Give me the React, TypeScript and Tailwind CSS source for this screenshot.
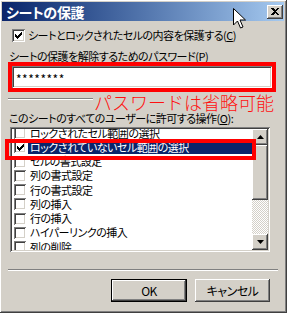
import React from "react";

const raised =
  "shadow-[inset_-1px_-1px_#404040,inset_1px_1px_#ffffff,inset_-2px_-2px_#808080,inset_2px_2px_#d4d0c8]";
const sunken =
  "shadow-[inset_1px_1px_#808080,inset_-1px_-1px_#ffffff,inset_2px_2px_#404040,inset_-2px_-2px_#d4d0c8]";

const CheckMark = () => (
  <svg width="7" height="7" viewBox="0 0 7 7" shapeRendering="crispEdges">
    <path d="M0 2h1v1h1v1h1v-1h1v-1h1v-1h1v-1h1v3h-1v1h-1v1h-1v1h-1v1h-1v-1h-1v-1h-1v-1h-1z" fill="#000" />
  </svg>
);

const Box = ({ checked, size = 13 }: { checked?: boolean; size?: number }) => (
  <div
    className={`shrink-0 bg-white flex items-center justify-center ${sunken}`}
    style={{ width: size, height: size }}
  >
    {checked && <CheckMark />}
  </div>
);

const items = [
  "ロックされたセル範囲の選択",
  "ロックされていないセル範囲の選択",
  "セルの書式設定",
  "列の書式設定",
  "行の書式設定",
  "列の挿入",
  "行の挿入",
  "ハイパーリンクの挿入",
  "列の削除",
];

const Separator = ({ className = "" }: { className?: string }) => (
  <div className={`h-[2px] border-t border-t-[#808080] border-b border-b-white ${className}`} />
);

export default function App() {
  return (
    <div
      className={`relative w-[287px] h-[313px] bg-[#d4d0c8] ${raised} pt-[2px] pl-[2px] pr-[3px] pb-[3px] flex flex-col text-[11px] tracking-[-0.5px] text-black [font-feature-settings:'palt']`}
      style={{ fontFamily: '"Noto Sans CJK JP", sans-serif' }}
    >
      {/* title bar */}
      <div className="h-[19px] flex items-center justify-between bg-gradient-to-r from-[#0a246a] to-[#a6caf0] pl-[4px] pr-[1px]">
        <span className="text-white font-bold text-[14px] tracking-[-0.3px] leading-none">シートの保護</span>
        <div className={`w-[16px] h-[14px] bg-[#d4d0c8] ${raised} flex items-center justify-center`}>
          <svg width="8" height="7" viewBox="0 0 8 7" shapeRendering="crispEdges">
            <path d="M0 0h2l2 2l2-2h2l-3 3.5l3 3.5h-2l-2-2l-2 2h-2l3-3.5z" fill="#000" />
          </svg>
        </div>
      </div>

      {/* body */}
      <div className="flex flex-col">
        <div className="mt-[7px] h-[14px] pl-[10px] flex items-center gap-[3px]">
          <Box checked />
          <span className="leading-none">シートとロックされたセルの内容を保護する(<span className="underline">C</span>)</span>
        </div>

        <div className="mt-[8px] h-[12px] pl-[7px] flex items-center">
          <span className="leading-none">シートの保護を解除するためのパスワード(<span className="underline">P</span>)</span>
        </div>

        <div className="ml-[6px] w-[268px] h-[30px] border-[4px] border-[#ff0000] bg-[#ff0000]">
          <div className={`h-full bg-white ${sunken} flex items-center pl-[4px]`}>
            <span className="text-[12px] leading-none tracking-[0.5px] pt-[3px]">********</span>
          </div>
        </div>

        <div className="h-[20px] flex items-start">
          <Separator className="mt-[6px] ml-[6px] w-[85px]" />
          <span className="text-[#ff1010] text-[18px] leading-[20px] [font-feature-settings:normal] tracking-[0px] ml-[1px] font-light">
            パスワードは省略可能
          </span>
        </div>

        <div className="h-[12px] pl-[7px] flex items-center">
          <span className="leading-none">このシートのすべてのユーザーに許可する操作(<span className="underline">O</span>):</span>
        </div>

        {/* list box */}
        <div className="relative mt-[3px] ml-[8px] w-[260px] h-[125px]">
          <div className={`absolute inset-0 bg-white ${sunken} p-[2px] flex`}>
            <div className="flex-1 overflow-hidden">
              <div className="mt-[-3px] flex flex-col">
                {items.map((t, i) => (
                  <div key={t} className="h-[14.25px] flex items-center pl-[2px]">
                    <Box checked={i === 1} size={12} />
                    <span
                      className={`ml-[2px] flex-1 pl-[2px] h-[14px] flex items-center leading-none whitespace-nowrap ${
                        i === 1 ? "bg-[#0a246a] text-white" : ""
                      }`}
                    >
                      {t}
                    </span>
                  </div>
                ))}
              </div>
            </div>
            {/* scrollbar */}
            <div className="w-[16px] flex flex-col">
              <div className={`h-[16px] bg-[#d4d0c8] ${raised} flex items-center justify-center`}>
                <svg width="7" height="4" viewBox="0 0 7 4"><path d="M3.5 0L7 4H0z" fill="#000" /></svg>
              </div>
              <div className={`h-[55px] bg-[#d4d0c8] ${raised}`} />
              <div className="flex-1 bg-[repeating-conic-gradient(#ffffff_0_25%,#d4d0c8_0_50%)] bg-[length:2px_2px]" />
              <div className={`h-[16px] bg-[#d4d0c8] ${raised} flex items-center justify-center`}>
                <svg width="7" height="4" viewBox="0 0 7 4"><path d="M0 0H7L3.5 4z" fill="#000" /></svg>
              </div>
            </div>
          </div>
          {/* annotation around item 2 */}
          <div className="absolute left-[-5px] top-[12px] w-[251px] h-[21px] border-[4px] border-[#ff0000]" />
        </div>

        <Separator className="mt-[17px] ml-[6px] w-[270px]" />

        <div className="mt-[8px] flex justify-end gap-[8px] pr-[14px]">
          <div className="w-[76px] h-[23px] border border-black">
            <div className={`w-full h-full bg-[#d4d0c8] ${raised} flex items-center justify-center`}>
              <span className="leading-none text-[12px]">OK</span>
            </div>
          </div>
          <div className={`w-[75px] h-[23px] bg-[#d4d0c8] ${raised} flex items-center justify-center`}>
            <span className="leading-none text-[12px]">キャンセル</span>
          </div>
        </div>
      </div>

      {/* mouse cursor */}
      <svg
        className="absolute left-[233px] top-[8px]"
        width="13"
        height="21"
        viewBox="0 0 13 21"
      >
        <path d="M0.5 0.5V17L4.5 13L7.5 20L10 19L7 12H12.5Z" fill="#fff" stroke="#000" strokeWidth="1" />
      </svg>
    </div>
  );
}
